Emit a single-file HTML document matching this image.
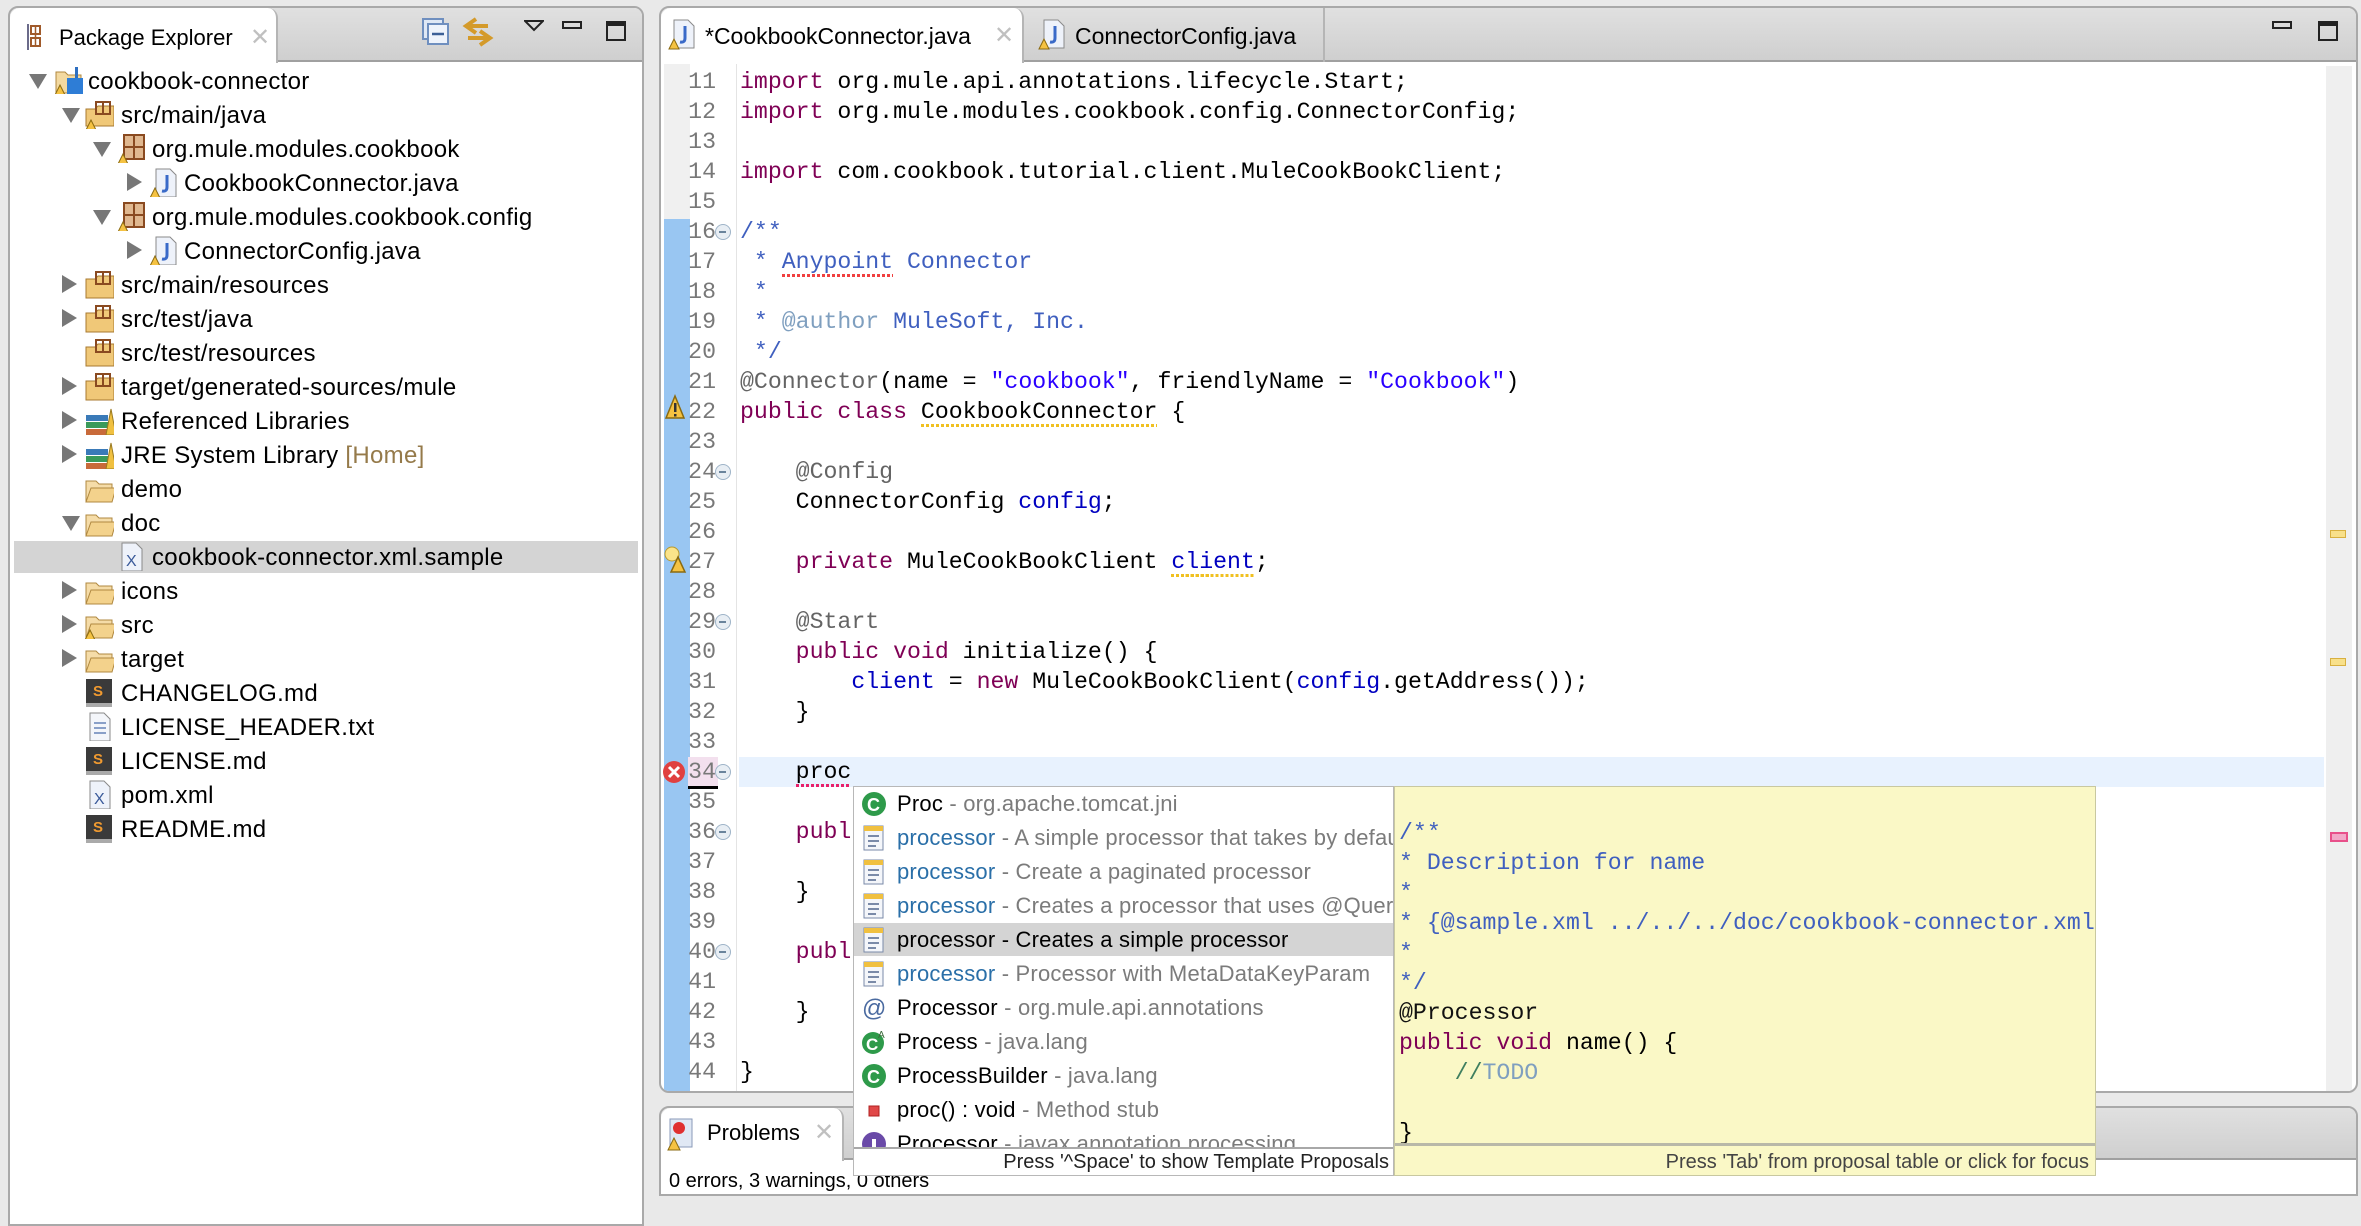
<!DOCTYPE html>
<html><head><meta charset="utf-8">
<style>
*{margin:0;padding:0;box-sizing:border-box}
body{width:2361px;height:1174px;overflow:hidden;background:#e9e9e9;position:relative;font-family:"Liberation Sans",sans-serif;color:#000}
.abs{position:absolute}
.panel{position:absolute;background:#fff;border:2px solid #a9a9a9;border-radius:10px 10px 0 0;overflow:hidden}
.hdr{position:absolute;left:0;right:0;top:0;height:54px;background:linear-gradient(#e0e0e0,#cfcfcf);border-bottom:2px solid #a0a0a0}
.tab{position:absolute;top:0;height:55px;background:#fff;border-radius:10px 10px 0 0;border-right:2px solid #b5b5b5}
.tt{position:absolute;font-size:22px;white-space:nowrap;line-height:30px}
.row{position:absolute;height:34px;line-height:34px;font-size:24px;letter-spacing:0.3px;white-space:nowrap}
.tri{position:absolute;width:0;height:0}
.tc{border-left:15px solid #777;border-top:9px solid transparent;border-bottom:9px solid transparent}
.to{border-top:15px solid #777;border-left:9px solid transparent;border-right:9px solid transparent}
.ic{position:absolute;width:30px;height:30px}
.code{position:absolute;font-family:"Liberation Mono",monospace;font-size:23.2px;line-height:30px;white-space:pre;color:#000}
.ln{position:absolute;font-family:"Liberation Mono",monospace;font-size:23.2px;line-height:30px;color:#787878;text-align:right;width:60px}
.k{color:#7f0055}.a{color:#646464}.s{color:#2a00ff}.f{color:#0000c0}.c{color:#3f5fbf}.t{color:#7f9fbf}.g{color:#3f7f5f}
.sqy{background:repeating-linear-gradient(90deg,#f0c020 0 3px,transparent 3px 5px) bottom/100% 3px no-repeat;padding-bottom:2px}
.sqr{background:repeating-linear-gradient(90deg,#f04040 0 3px,transparent 3px 5px) bottom/100% 3px no-repeat;padding-bottom:2px}
.sqp{background:repeating-linear-gradient(90deg,#e8206a 0 3px,transparent 3px 5px) bottom/100% 3px no-repeat;padding-bottom:2px}
.fold{position:absolute;width:16px;height:16px;border-radius:50%;border:1.5px solid #9fb4c8;background:#e8eef4}
.fold:after{content:"";position:absolute;left:3px;top:6px;width:7px;height:1.5px;background:#6a849c}
.pr{position:absolute;left:0;right:0;height:34px;line-height:34px;font-size:22px;white-space:nowrap;padding-left:43px;letter-spacing:0.2px}
.pr .d{color:#7b7b7b}.pr .b{color:#2a6fa8}
.pi{position:absolute;left:7px;top:4px;width:26px;height:26px}
</style></head><body>

<!-- LEFT PANEL -->
<div class="panel" style="left:8px;top:6px;width:636px;height:1220px">
 <div class="hdr"></div>
 <div class="tab" style="left:0;width:268px"></div>
 <svg class="abs" style="left:16px;top:14px" width="16" height="30"><rect x="1" y="2" width="2" height="26" fill="#6b6b8a"/><rect x="5" y="4" width="9" height="8" fill="none" stroke="#a05a2a" stroke-width="2"/><rect x="5" y="16" width="9" height="8" fill="none" stroke="#a05a2a" stroke-width="2"/><line x1="9.5" y1="4" x2="9.5" y2="24" stroke="#a05a2a" stroke-width="1.5"/></svg>
 <div class="tt" style="left:49px;top:15px">Package Explorer</div>
 <div class="tt" style="left:240px;top:15px;color:#c0c0c0;font-size:24px">✕</div>
 <svg class="abs" style="left:412px;top:10px" width="28" height="28"><rect x="1" y="1" width="20" height="20" fill="#dfe8f5" stroke="#6f8fbf" stroke-width="2"/><rect x="6" y="6" width="20" height="20" fill="#eef3fb" stroke="#6f8fbf" stroke-width="2"/><line x1="10" y1="16" x2="22" y2="16" stroke="#3b5f96" stroke-width="2.5"/></svg>
 <svg class="abs" style="left:452px;top:8px" width="32" height="32"><path d="M14 3 L4 10 L14 17 M4 10 H26" fill="none" stroke="#d49a2a" stroke-width="4"/><path d="M18 15 L28 22 L18 29 M28 22 H6" fill="none" stroke="#d49a2a" stroke-width="4"/></svg>
 <svg class="abs" style="left:514px;top:12px" width="20" height="12"><path d="M1 1 H19 L10 10 Z" fill="none" stroke="#222" stroke-width="2"/></svg>
 <div class="abs" style="left:552px;top:13px;width:20px;height:8px;border:2.5px solid #222"></div>
 <div class="abs" style="left:596px;top:13px;width:20px;height:20px;border:2.5px solid #222;border-top-width:5px"></div>
</div>

<!-- tree -->
<div class="abs" style="left:14px;top:541px;width:624px;height:32px;background:#d4d4d4"></div>

<div class="tri to" style="left:29px;top:74px"></div>
<svg class="ic" style="left:53px;top:64px" width="34" height="34"><path d="M3 8 h9 l3 3 h13 v18 h-25 z" fill="#f3d9a0" stroke="#b08840"/><rect x="14" y="14" width="16" height="16" fill="#2e7dd6"/><rect x="22" y="3" width="3" height="11" fill="#2e6fc0"/><path d="M2 31 L7 21 L12 31 Z" fill="#f5c242" stroke="#8a6a10"/></svg>
<div class="row" style="left:88px;top:65px">cookbook-connector</div>

<div class="tri to" style="left:62px;top:108px"></div>
<svg class="ic" style="left:84px;top:99px" width="34" height="32"><path d="M2 10 h9 l3 -3 h16 v20 h-28 z" fill="#f0c878" stroke="#a87a30"/><rect x="12" y="3" width="14" height="12" fill="none" stroke="#8a4a20" stroke-width="2"/><line x1="19" y1="3" x2="19" y2="15" stroke="#8a4a20" stroke-width="2"/><path d="M2 31 L7 21 L12 31 Z" fill="#f5c242" stroke="#8a6a10"/></svg>
<div class="row" style="left:121px;top:99px">src/main/java</div>

<div class="tri to" style="left:93px;top:142px"></div>
<svg class="ic" style="left:116px;top:133px" width="32" height="32"><rect x="8" y="2" width="20" height="24" fill="#e0b890" stroke="#8a4a20" stroke-width="2"/><line x1="18" y1="2" x2="18" y2="26" stroke="#8a4a20" stroke-width="2"/><line x1="8" y1="14" x2="28" y2="14" stroke="#8a4a20" stroke-width="2"/><path d="M2 31 L7 21 L12 31 Z" fill="#f5c242" stroke="#8a6a10"/></svg>
<div class="row" style="left:152px;top:133px">org.mule.modules.cookbook</div>

<div class="tri tc" style="left:127px;top:173px"></div>
<svg class="ic" style="left:148px;top:167px" width="32" height="32"><path d="M8 2 h14 l6 6 v22 h-20 z" fill="#eef2fa" stroke="#8a8a8a"/><path d="M19 8 v12 q0 5 -5 4" fill="none" stroke="#3a6ac8" stroke-width="3"/><path d="M2 31 L7 21 L12 31 Z" fill="#f5c242" stroke="#8a6a10"/></svg>
<div class="row" style="left:184px;top:167px">CookbookConnector.java</div>

<div class="tri to" style="left:93px;top:210px"></div>
<svg class="ic" style="left:116px;top:201px" width="32" height="32"><rect x="8" y="2" width="20" height="24" fill="#e0b890" stroke="#8a4a20" stroke-width="2"/><line x1="18" y1="2" x2="18" y2="26" stroke="#8a4a20" stroke-width="2"/><line x1="8" y1="14" x2="28" y2="14" stroke="#8a4a20" stroke-width="2"/><path d="M2 31 L7 21 L12 31 Z" fill="#f5c242" stroke="#8a6a10"/></svg>
<div class="row" style="left:152px;top:201px">org.mule.modules.cookbook.config</div>

<div class="tri tc" style="left:127px;top:241px"></div>
<svg class="ic" style="left:148px;top:235px" width="32" height="32"><path d="M8 2 h14 l6 6 v22 h-20 z" fill="#eef2fa" stroke="#8a8a8a"/><path d="M19 8 v12 q0 5 -5 4" fill="none" stroke="#3a6ac8" stroke-width="3"/><path d="M2 31 L7 21 L12 31 Z" fill="#f5c242" stroke="#8a6a10"/></svg>
<div class="row" style="left:184px;top:235px">ConnectorConfig.java</div>

<div class="tri tc" style="left:62px;top:275px"></div>
<svg class="ic" style="left:84px;top:269px" width="34" height="32"><path d="M2 10 h9 l3 -3 h16 v22 h-28 z" fill="#f0c878" stroke="#a87a30"/><rect x="12" y="3" width="14" height="12" fill="none" stroke="#8a4a20" stroke-width="2"/><line x1="19" y1="3" x2="19" y2="15" stroke="#8a4a20" stroke-width="2"/></svg>
<div class="row" style="left:121px;top:269px">src/main/resources</div>

<div class="tri tc" style="left:62px;top:309px"></div>
<svg class="ic" style="left:84px;top:303px" width="34" height="32"><path d="M2 10 h9 l3 -3 h16 v22 h-28 z" fill="#f0c878" stroke="#a87a30"/><rect x="12" y="3" width="14" height="12" fill="none" stroke="#8a4a20" stroke-width="2"/><line x1="19" y1="3" x2="19" y2="15" stroke="#8a4a20" stroke-width="2"/></svg>
<div class="row" style="left:121px;top:303px">src/test/java</div>

<svg class="ic" style="left:84px;top:337px" width="34" height="32"><path d="M2 10 h9 l3 -3 h16 v22 h-28 z" fill="#f0c878" stroke="#a87a30"/><rect x="12" y="3" width="14" height="12" fill="none" stroke="#8a4a20" stroke-width="2"/><line x1="19" y1="3" x2="19" y2="15" stroke="#8a4a20" stroke-width="2"/></svg>
<div class="row" style="left:121px;top:337px">src/test/resources</div>

<div class="tri tc" style="left:62px;top:377px"></div>
<svg class="ic" style="left:84px;top:371px" width="34" height="32"><path d="M2 10 h9 l3 -3 h16 v22 h-28 z" fill="#f0c878" stroke="#a87a30"/><rect x="12" y="3" width="14" height="12" fill="none" stroke="#8a4a20" stroke-width="2"/><line x1="19" y1="3" x2="19" y2="15" stroke="#8a4a20" stroke-width="2"/></svg>
<div class="row" style="left:121px;top:371px">target/generated-sources/mule</div>

<div class="tri tc" style="left:62px;top:411px"></div>
<svg class="ic" style="left:84px;top:405px" width="34" height="32"><rect x="2" y="10" width="22" height="6" fill="#3a7ab8"/><rect x="2" y="17" width="22" height="6" fill="#3a9a5a"/><rect x="2" y="24" width="22" height="6" fill="#c86a3a"/><path d="M22 30 L27 4 L32 30 Z" fill="#f0c040" stroke="#9a7a20"/></svg>
<div class="row" style="left:121px;top:405px">Referenced Libraries</div>

<div class="tri tc" style="left:62px;top:445px"></div>
<svg class="ic" style="left:84px;top:439px" width="34" height="32"><rect x="2" y="10" width="22" height="6" fill="#3a7ab8"/><rect x="2" y="17" width="22" height="6" fill="#3a9a5a"/><rect x="2" y="24" width="22" height="6" fill="#c86a3a"/><path d="M22 30 L27 4 L32 30 Z" fill="#f0c040" stroke="#9a7a20"/></svg>
<div class="row" style="left:121px;top:439px">JRE System Library <span style="color:#957a4a">[Home]</span></div>

<svg class="ic" style="left:84px;top:473px" width="34" height="32"><path d="M2 8 h10 l3 3 h13 v18 h-26 z" fill="#f5dca8" stroke="#b08840"/><path d="M2 29 L7 15 H32 L28 29 Z" fill="#f3d28c" stroke="#b08840"/></svg>
<div class="row" style="left:121px;top:473px">demo</div>

<div class="tri to" style="left:62px;top:516px"></div>
<svg class="ic" style="left:84px;top:507px" width="34" height="32"><path d="M2 8 h10 l3 3 h13 v18 h-26 z" fill="#f5dca8" stroke="#b08840"/><path d="M2 29 L7 15 H32 L28 29 Z" fill="#f3d28c" stroke="#b08840"/></svg>
<div class="row" style="left:121px;top:507px">doc</div>

<svg class="ic" style="left:118px;top:541px" width="32" height="32"><path d="M4 2 h14 l6 6 v22 h-20 z" fill="#eef2fa" stroke="#8a8a8a"/><text x="8" y="25" font-family="Liberation Sans" font-size="16" fill="#3a5a9a">X</text></svg>
<div class="row" style="left:152px;top:541px">cookbook-connector.xml.sample</div>

<div class="tri tc" style="left:62px;top:581px"></div>
<svg class="ic" style="left:84px;top:575px" width="34" height="32"><path d="M2 8 h10 l3 3 h13 v18 h-26 z" fill="#f5dca8" stroke="#b08840"/><path d="M2 29 L7 15 H32 L28 29 Z" fill="#f3d28c" stroke="#b08840"/></svg>
<div class="row" style="left:121px;top:575px">icons</div>

<div class="tri tc" style="left:62px;top:615px"></div>
<svg class="ic" style="left:84px;top:609px" width="34" height="32"><path d="M2 8 h10 l3 3 h13 v18 h-26 z" fill="#f5dca8" stroke="#b08840"/><path d="M2 29 L7 15 H32 L28 29 Z" fill="#f3d28c" stroke="#b08840"/><path d="M1 31 L6 21 L11 31 Z" fill="#f5c242" stroke="#8a6a10"/></svg>
<div class="row" style="left:121px;top:609px">src</div>

<div class="tri tc" style="left:62px;top:649px"></div>
<svg class="ic" style="left:84px;top:643px" width="34" height="32"><path d="M2 8 h10 l3 3 h13 v18 h-26 z" fill="#f5dca8" stroke="#b08840"/><path d="M2 29 L7 15 H32 L28 29 Z" fill="#f3d28c" stroke="#b08840"/></svg>
<div class="row" style="left:121px;top:643px">target</div>

<svg class="ic" style="left:84px;top:677px" width="32" height="32"><rect x="2" y="2" width="26" height="24" fill="#3a3a3a"/><rect x="2" y="26" width="26" height="4" fill="#aaa"/><text x="9" y="19" font-family="Liberation Sans" font-size="15" font-weight="bold" fill="#f09a30">S</text></svg>
<div class="row" style="left:121px;top:677px">CHANGELOG.md</div>

<svg class="ic" style="left:84px;top:711px" width="32" height="32"><path d="M6 2 h14 l6 6 v22 h-20 z" fill="#f4f6fa" stroke="#8a8a8a"/><line x1="10" y1="12" x2="22" y2="12" stroke="#8aa0c8" stroke-width="2"/><line x1="10" y1="17" x2="22" y2="17" stroke="#8aa0c8" stroke-width="2"/><line x1="10" y1="22" x2="22" y2="22" stroke="#8aa0c8" stroke-width="2"/></svg>
<div class="row" style="left:121px;top:711px">LICENSE_HEADER.txt</div>

<svg class="ic" style="left:84px;top:745px" width="32" height="32"><rect x="2" y="2" width="26" height="24" fill="#3a3a3a"/><rect x="2" y="26" width="26" height="4" fill="#aaa"/><text x="9" y="19" font-family="Liberation Sans" font-size="15" font-weight="bold" fill="#f09a30">S</text></svg>
<div class="row" style="left:121px;top:745px">LICENSE.md</div>

<svg class="ic" style="left:84px;top:779px" width="32" height="32"><path d="M6 2 h14 l6 6 v22 h-20 z" fill="#eef2fa" stroke="#8a8a8a"/><text x="10" y="25" font-family="Liberation Sans" font-size="16" fill="#3a5a9a">X</text></svg>
<div class="row" style="left:121px;top:779px">pom.xml</div>

<svg class="ic" style="left:84px;top:813px" width="32" height="32"><rect x="2" y="2" width="26" height="24" fill="#3a3a3a"/><rect x="2" y="26" width="26" height="4" fill="#aaa"/><text x="9" y="19" font-family="Liberation Sans" font-size="15" font-weight="bold" fill="#f09a30">S</text></svg>
<div class="row" style="left:121px;top:813px">README.md</div>

<!-- EDITOR PANEL -->
<div class="panel" style="left:659px;top:6px;width:1699px;height:1087px;border-radius:10px 10px 10px 10px">
 <div class="hdr"></div>
 <div class="tab" style="left:0;width:363px"></div>
 <div class="abs" style="left:662px;top:0;width:2px;height:54px;background:#b5b5b5"></div>
 <div class="abs" style="left:3px;top:56px;width:26px;height:156px;background:#f0f0f0"></div>
 <div class="abs" style="left:3px;top:211px;width:26px;height:880px;background:#99c6f2"></div>
 <div class="abs" style="left:75px;top:56px;width:1px;height:1030px;background:#e4e4e4"></div>
 <div class="abs" style="left:1665px;top:58px;width:26px;height:1030px;background:#efefef"></div>
 <div class="abs" style="left:1611px;top:13px;width:20px;height:8px;border:2.5px solid #222"></div>
 <div class="abs" style="left:1657px;top:13px;width:20px;height:20px;border:2.5px solid #222;border-top-width:5px"></div>
</div>
<svg class="abs" style="left:668px;top:18px" width="30" height="32"><path d="M6 2 h14 l6 6 v22 h-20 z" fill="#eef2fa" stroke="#8a8a8a"/><path d="M17 8 v12 q0 5 -5 4" fill="none" stroke="#3a6ac8" stroke-width="3"/><path d="M1 31 L6 21 L11 31 Z" fill="#f5c242" stroke="#8a6a10"/></svg>
<div class="tt" style="left:705px;top:21px;font-size:23px">*CookbookConnector.java</div>
<div class="tt" style="left:994px;top:21px;color:#c0c0c0;font-size:24px">✕</div>
<svg class="abs" style="left:1038px;top:18px" width="30" height="32"><path d="M6 2 h14 l6 6 v22 h-20 z" fill="#eef2fa" stroke="#8a8a8a"/><path d="M17 8 v12 q0 5 -5 4" fill="none" stroke="#3a6ac8" stroke-width="3"/><path d="M1 31 L6 21 L11 31 Z" fill="#f5c242" stroke="#8a6a10"/></svg>
<div class="tt" style="left:1075px;top:21px;font-size:23px">ConnectorConfig.java</div>

<div class="abs" style="left:739px;top:757px;width:1585px;height:30px;background:#e8f2fe"></div>
<div class="abs" style="left:688px;top:757px;width:30px;height:30px;background:#f3e0ee"></div>
<div class="abs" style="left:688px;top:786px;width:30px;height:3px;background:#000"></div>

<div class="ln" style="left:656px;top:67px">11<br>12<br>13<br>14<br>15<br>16<br>17<br>18<br>19<br>20<br>21<br>22<br>23<br>24<br>25<br>26<br>27<br>28<br>29<br>30<br>31<br>32<br>33<br>34<br>35<br>36<br>37<br>38<br>39<br>40<br>41<br>42<br>43<br>44</div>
<div class="fold" style="left:715px;top:224px"></div>
<div class="fold" style="left:715px;top:464px"></div>
<div class="fold" style="left:715px;top:614px"></div>
<div class="fold" style="left:715px;top:764px"></div>
<div class="fold" style="left:715px;top:824px"></div>
<div class="fold" style="left:715px;top:944px"></div>

<svg class="abs" style="left:664px;top:394px" width="22" height="26"><path d="M2 24 L11 2 L20 24 Z" fill="#f5c242" stroke="#8a6a10" stroke-width="1.5"/><rect x="10" y="9" width="2.5" height="9" fill="#333"/><rect x="10" y="20" width="2.5" height="2.5" fill="#333"/></svg>
<svg class="abs" style="left:663px;top:545px" width="24" height="28"><circle cx="9" cy="9" r="7" fill="#fbe48a" stroke="#b89a30"/><path d="M8 27 L15 12 L22 27 Z" fill="#f5c242" stroke="#8a6a10" stroke-width="1.5"/></svg>
<svg class="abs" style="left:662px;top:760px" width="26" height="26"><circle cx="12" cy="12" r="11" fill="#e04040"/><path d="M7 7 L17 17 M17 7 L7 17" stroke="#fff" stroke-width="3"/></svg>

<div class="code" style="left:740px;top:67px"><span class="k">import</span> org.mule.api.annotations.lifecycle.Start;
<span class="k">import</span> org.mule.modules.cookbook.config.ConnectorConfig;

<span class="k">import</span> com.cookbook.tutorial.client.MuleCookBookClient;

<span class="c">/**</span>
<span class="c"> * <span class="sqr">Anypoint</span> Connector</span>
<span class="c"> *</span>
<span class="c"> * <span class="t">@author</span> MuleSoft, Inc.</span>
<span class="c"> */</span>
<span class="a">@Connector</span>(name = <span class="s">"cookbook"</span>, friendlyName = <span class="s">"Cookbook"</span>)
<span class="k">public</span> <span class="k">class</span> <span class="sqy">CookbookConnector</span> {

    <span class="a">@Config</span>
    ConnectorConfig <span class="f">config</span>;

    <span class="k">private</span> MuleCookBookClient <span class="f sqy">client</span>;

    <span class="a">@Start</span>
    <span class="k">public</span> <span class="k">void</span> initialize() {
        <span class="f">client</span> = <span class="k">new</span> MuleCookBookClient(<span class="f">config</span>.getAddress());
    }

    <span class="sqp">proc</span>

    <span class="k">public</span> <span class="k">void</span> x

    }

    <span class="k">public</span> <span class="k">void</span> y

    }

}</div>

<div class="abs" style="left:2330px;top:530px;width:16px;height:8px;background:#f8e08a;border:1px solid #d8b040"></div>
<div class="abs" style="left:2330px;top:658px;width:16px;height:8px;background:#f8e08a;border:1px solid #d8b040"></div>
<div class="abs" style="left:2330px;top:832px;width:18px;height:10px;background:#f2a8c8;border:2px solid #e8508a"></div>

<!-- BOTTOM PANEL -->
<div class="panel" style="left:659px;top:1106px;width:1699px;height:90px">
 <div class="hdr" style="height:52px"></div>
 <div class="tab" style="left:0;width:183px;height:53px"></div>
</div>
<svg class="abs" style="left:667px;top:1117px" width="30" height="34"><rect x="3" y="2" width="22" height="28" fill="#e0e8f4" stroke="#8a9ab8"/><circle cx="12" cy="11" r="6" fill="#e03030"/><path d="M1 33 L7 21 L13 33 Z" fill="#f5c242" stroke="#8a6a10"/></svg>
<div class="tt" style="left:707px;top:1118px">Problems</div>
<div class="tt" style="left:814px;top:1118px;color:#c0c0c0;font-size:24px">✕</div>
<div class="tt" style="left:669px;top:1166px;font-size:20px">0 errors, 3 warnings, 0 others</div>

<!-- COMPLETION POPUP -->
<div class="abs" style="left:853px;top:786px;width:541px;height:390px;background:#fff;border:1px solid #b8b8b8;overflow:hidden">
 <div class="pr" style="top:0px"><svg class="pi" viewBox="0 0 26 26"><circle cx="13" cy="13" r="12" fill="#2e9a4a"/><text x="6" y="20" font-family="Liberation Sans" font-weight="bold" font-size="18" fill="#fff">C</text></svg>Proc <span class="d">- org.apache.tomcat.jni</span></div>
 <div class="pr" style="top:34px"><svg class="pi" viewBox="0 0 26 26"><rect x="3" y="1" width="19" height="24" fill="#f4f6fa" stroke="#7a8aa8"/><rect x="3" y="1" width="19" height="5" fill="#f0c040"/><line x1="7" y1="11" x2="18" y2="11" stroke="#7a8aa8" stroke-width="2"/><line x1="7" y1="16" x2="18" y2="16" stroke="#7a8aa8" stroke-width="2"/><line x1="7" y1="21" x2="15" y2="21" stroke="#7a8aa8" stroke-width="2"/></svg><span class="b">processor</span> <span class="d">- A simple processor that takes by default</span></div>
 <div class="pr" style="top:68px"><svg class="pi" viewBox="0 0 26 26"><rect x="3" y="1" width="19" height="24" fill="#f4f6fa" stroke="#7a8aa8"/><rect x="3" y="1" width="19" height="5" fill="#f0c040"/><line x1="7" y1="11" x2="18" y2="11" stroke="#7a8aa8" stroke-width="2"/><line x1="7" y1="16" x2="18" y2="16" stroke="#7a8aa8" stroke-width="2"/><line x1="7" y1="21" x2="15" y2="21" stroke="#7a8aa8" stroke-width="2"/></svg><span class="b">processor</span> <span class="d">- Create a paginated processor</span></div>
 <div class="pr" style="top:102px"><svg class="pi" viewBox="0 0 26 26"><rect x="3" y="1" width="19" height="24" fill="#f4f6fa" stroke="#7a8aa8"/><rect x="3" y="1" width="19" height="5" fill="#f0c040"/><line x1="7" y1="11" x2="18" y2="11" stroke="#7a8aa8" stroke-width="2"/><line x1="7" y1="16" x2="18" y2="16" stroke="#7a8aa8" stroke-width="2"/><line x1="7" y1="21" x2="15" y2="21" stroke="#7a8aa8" stroke-width="2"/></svg><span class="b">processor</span> <span class="d">- Creates a processor that uses @Query</span></div>
 <div class="pr" style="top:136px;height:33px;background:#d4d4d4"><svg class="pi" viewBox="0 0 26 26"><rect x="3" y="1" width="19" height="24" fill="#f4f6fa" stroke="#7a8aa8"/><rect x="3" y="1" width="19" height="5" fill="#f0c040"/><line x1="7" y1="11" x2="18" y2="11" stroke="#7a8aa8" stroke-width="2"/><line x1="7" y1="16" x2="18" y2="16" stroke="#7a8aa8" stroke-width="2"/><line x1="7" y1="21" x2="15" y2="21" stroke="#7a8aa8" stroke-width="2"/></svg>processor - Creates a simple processor</div>
 <div class="pr" style="top:170px"><svg class="pi" viewBox="0 0 26 26"><rect x="3" y="1" width="19" height="24" fill="#f4f6fa" stroke="#7a8aa8"/><rect x="3" y="1" width="19" height="5" fill="#f0c040"/><line x1="7" y1="11" x2="18" y2="11" stroke="#7a8aa8" stroke-width="2"/><line x1="7" y1="16" x2="18" y2="16" stroke="#7a8aa8" stroke-width="2"/><line x1="7" y1="21" x2="15" y2="21" stroke="#7a8aa8" stroke-width="2"/></svg><span class="b">processor</span> <span class="d">- Processor with MetaDataKeyParam</span></div>
 <div class="pr" style="top:204px"><svg class="pi" viewBox="0 0 26 26"><text x="1" y="21" font-family="Liberation Sans" font-size="24" fill="#4a6aa0">@</text></svg>Processor <span class="d">- org.mule.api.annotations</span></div>
 <div class="pr" style="top:238px"><svg class="pi" viewBox="0 0 26 26"><circle cx="12" cy="14" r="11" fill="#2e9a4a"/><text x="5" y="21" font-family="Liberation Sans" font-weight="bold" font-size="17" fill="#fff">C</text><text x="17" y="9" font-family="Liberation Sans" font-size="10" fill="#3a6a3a">A</text></svg>Process <span class="d">- java.lang</span></div>
 <div class="pr" style="top:272px"><svg class="pi" viewBox="0 0 26 26"><circle cx="13" cy="13" r="12" fill="#2e9a4a"/><text x="6" y="20" font-family="Liberation Sans" font-weight="bold" font-size="18" fill="#fff">C</text></svg>ProcessBuilder <span class="d">- java.lang</span></div>
 <div class="pr" style="top:306px"><svg class="pi" viewBox="0 0 26 26"><rect x="8" y="9" width="10" height="10" fill="#e04848" stroke="#b02020"/></svg>proc() : void <span class="d">- Method stub</span></div>
 <div class="pr" style="top:340px"><svg class="pi" viewBox="0 0 26 26"><circle cx="13" cy="13" r="12" fill="#6a4aa8"/><rect x="11" y="8" width="4" height="14" fill="#fff"/></svg>Processor <span class="d">- javax.annotation.processing</span></div>
 <div class="abs" style="left:0;right:0;top:360px;height:40px;background:#fff;border-top:2px solid #a8a8a8"></div>
 <div class="abs" style="right:4px;top:362px;font-size:20px;line-height:26px;color:#222">Press '^Space' to show Template Proposals</div>
</div>

<!-- DOC POPUP -->
<div class="abs" style="left:1394px;top:786px;width:702px;height:390px;background:#faf8c6;border:1px solid #c8c8a0;overflow:hidden">
 <div class="code" style="left:4px;top:31px"><span class="c">/**
* Description for name
*
* {@sample.xml ../../../doc/cookbook-connector.xml.sample}
*
*/</span>
<span style="color:#111">@Processor</span>
<span class="k">public</span> <span class="k">void</span> name() {
    <span class="g">//</span><span class="t">TODO</span>

}</div>
 <div class="abs" style="left:0;right:0;top:356px;height:3px;background:#b8b8a8"></div>
 <div class="abs" style="right:6px;top:362px;font-size:20px;line-height:26px;color:#444">Press 'Tab' from proposal table or click for focus</div>
</div>

</body></html>
